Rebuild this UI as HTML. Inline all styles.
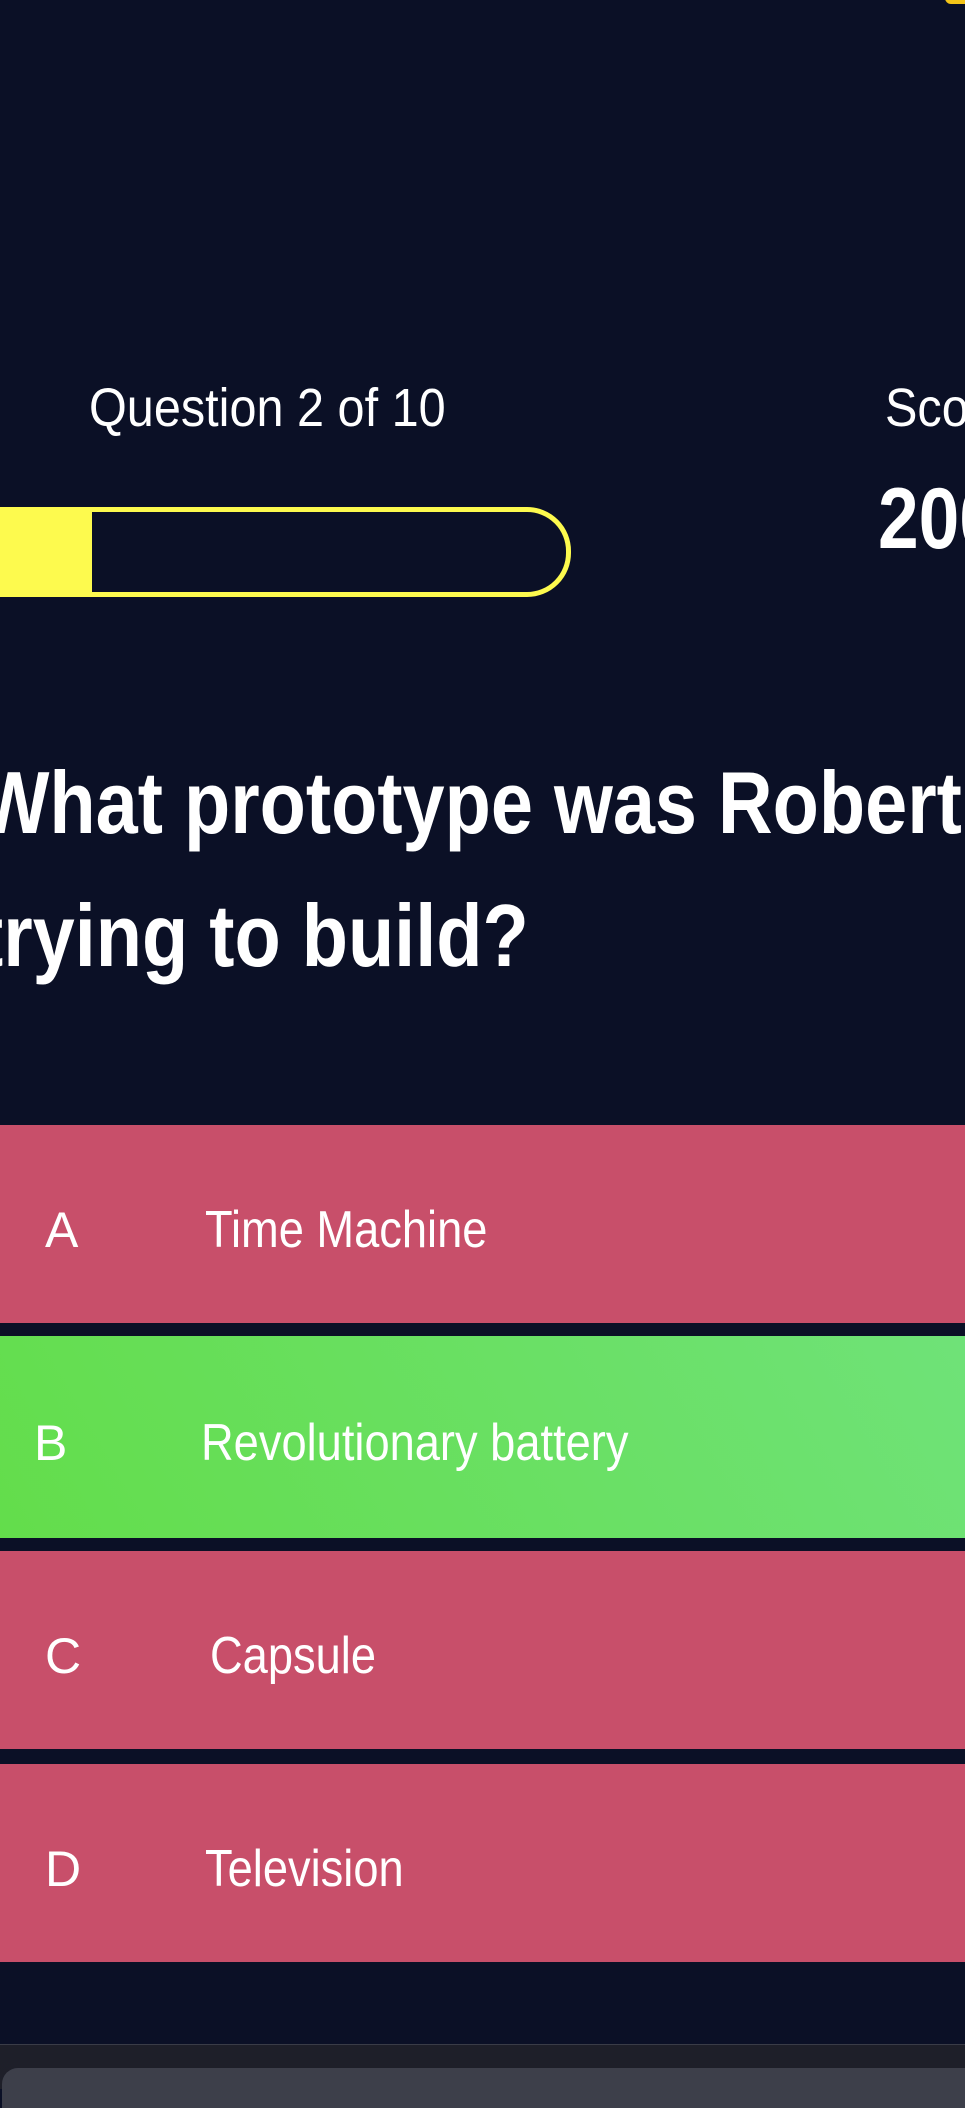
<!DOCTYPE html>
<html><head><meta charset="utf-8"><style>
html,body{margin:0;padding:0}
body{width:965px;height:2088px;background:#0b1026;position:relative;overflow:hidden;font-family:"Liberation Sans",sans-serif;color:#fff}
.a{position:absolute;white-space:nowrap}
.n{display:inline-block;transform-origin:0 0}
.opt{position:absolute;left:0;width:965px;height:198px;background:#c84f6a}
.opt .l{position:absolute;left:45px;top:80px;font-size:50px;line-height:50px}
.opt .t{position:absolute;left:205px;top:80px;font-size:52px;line-height:50px}
</style></head><body>
<div class="a" style="left:28px;top:-38px;font-size:40px;font-weight:bold">9:00</div>
<div class="a" style="left:818px;top:-4px;width:48px;height:4px;background:#fff"></div>
<div class="a" style="left:945px;top:-8px;width:30px;height:12px;border-radius:6px;background:#f5c518"></div>

<div class="a" style="left:89px;top:376px;font-size:54px;line-height:64px"><span class="n" style="transform:scaleX(0.9)">Question 2 of 10</span></div>
<div class="a" style="left:885px;top:376px;font-size:54px;line-height:64px"><span class="n" style="transform:scaleX(0.9)">Score</span></div>
<div class="a" style="left:878px;top:474px;font-size:86px;line-height:90px;font-weight:bold"><span class="n" style="transform:scaleX(0.85)">200</span></div>

<div class="a" style="left:-60px;top:507px;width:621px;height:80px;border:5px solid #fdfa4e;border-radius:0 44px 44px 0"></div>
<div class="a" style="left:0;top:507px;width:92px;height:90px;background:#fdfa4e"></div>

<div class="a" style="left:-22px;top:736px;font-size:88px;line-height:133px;font-weight:bold"><span class="n" style="transform:scaleX(0.86)">What prototype was Robert<br>trying to build?</span></div>

<div class="opt" style="top:1125px"><div class="l">A</div><div class="t"><span class="n" style="transform:scaleX(0.87)">Time Machine</span></div></div>
<div class="opt" style="top:1336px;height:202px;background:linear-gradient(60deg,#63dd4b,#6fe278)"><div class="l" style="left:34px;top:82px">B</div><div class="t" style="left:201px;top:82px"><span class="n" style="transform:scaleX(0.87)">Revolutionary battery</span></div></div>
<div class="opt" style="top:1551px"><div class="l">C</div><div class="t" style="left:210px"><span class="n" style="transform:scaleX(0.87)">Capsule</span></div></div>
<div class="opt" style="top:1764px"><div class="l">D</div><div class="t"><span class="n" style="transform:scaleX(0.87)">Television</span></div></div>

<div class="a" style="left:0;top:2044px;width:965px;height:44px;background:#1e1f29;border-top:1px solid #3a3c47"></div>
<div class="a" style="left:2px;top:2068px;width:975px;height:40px;background:#3d3f4a;border-radius:16px 0 0 0"></div>
</body></html>
